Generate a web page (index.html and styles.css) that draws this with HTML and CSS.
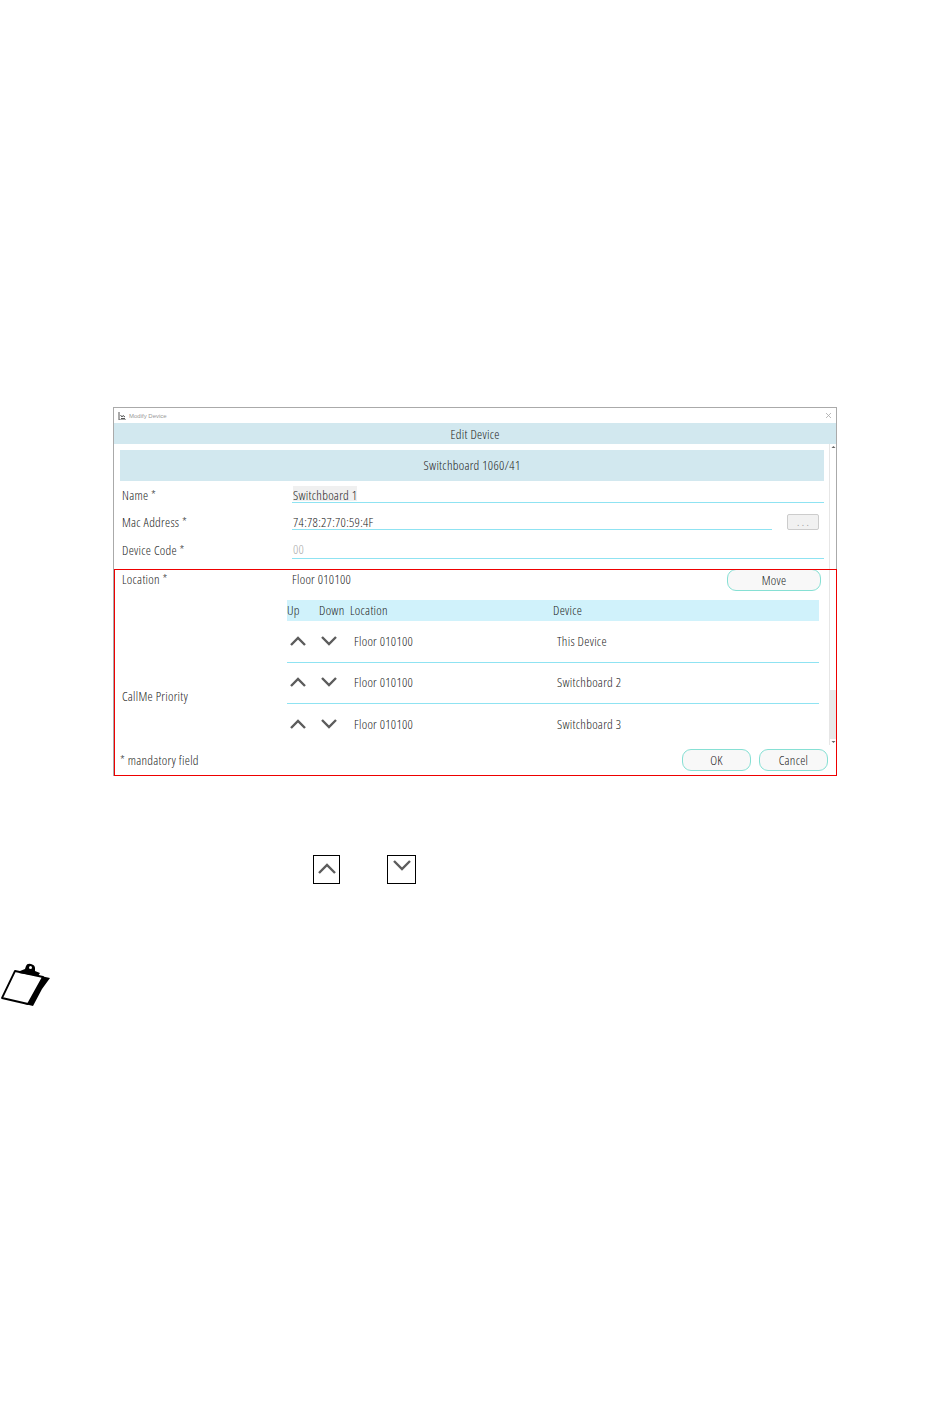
FILE: index.html
```html
<!DOCTYPE html>
<html>
<head>
<meta name="viewport" content="width=device-width, initial-scale=1">
<link rel="stylesheet" href="styles.css">
</head>
<body>

<div class="dialog">
  <div class="titlebar">
    <svg class="app-icon" width="8" height="8" viewBox="0 0 8 8"><path d="M1 0v8h7M2.500 3l1.500 2 1-1.500 2 1.500M3 6.500h4" fill="none" stroke="#555" stroke-width="1"/></svg>
    <span class="title-text">Modify Device</span>
    <svg class="close-icon" width="7" height="7" viewBox="0 0 7 7"><path d="M1 1l5 5M6 1l-5 5" stroke="#aaa" stroke-width="0.8"/></svg>
  </div>
  <div class="heading">Edit Device</div>

  <div class="scroll-area">
    <div class="form">
      <div class="banner">Switchboard 1060/41</div>

      <div class="field field-name">
        <span class="label">Name *</span>
        <div class="value"><span class="selected">Switchboard 1</span></div>
      </div>
      <div class="field field-mac">
        <span class="label">Mac Address *</span>
        <div class="mac-wrap">
          <div class="value">74:78:27:70:59:4F</div>
          <button class="dots" type="button">. . .</button>
        </div>
      </div>
      <div class="field field-code">
        <span class="label">Device Code *</span>
        <div class="value muted">00</div>
      </div>

      <div class="location">
        <span class="label">Location *</span>
        <span class="location-value">Floor 010100</span>
        <button class="round-btn move" type="button">Move</button>
      </div>

      <div class="priority">
        <span class="label priority-label">CallMe Priority</span>
        <div class="table">
          <div class="table-head">
            <span>Up</span><span>Down</span><span>Location</span><span>Device</span>
          </div>
          <div class="table-row">
            <svg class="chev" width="16" height="10" viewBox="0 0 16 10"><path d="M1 9l7-7 7 7"/></svg>
            <svg class="chev" width="16" height="10" viewBox="0 0 16 10"><path d="M1 1l7 7 7-7"/></svg>
            <span class="floor">Floor 010100</span>
            <span>This Device</span>
          </div>
          <div class="table-row">
            <svg class="chev" width="16" height="10" viewBox="0 0 16 10"><path d="M1 9l7-7 7 7"/></svg>
            <svg class="chev" width="16" height="10" viewBox="0 0 16 10"><path d="M1 1l7 7 7-7"/></svg>
            <span class="floor">Floor 010100</span>
            <span>Switchboard 2</span>
          </div>
          <div class="table-row">
            <svg class="chev" width="16" height="10" viewBox="0 0 16 10"><path d="M1 9l7-7 7 7"/></svg>
            <svg class="chev" width="16" height="10" viewBox="0 0 16 10"><path d="M1 1l7 7 7-7"/></svg>
            <span class="floor">Floor 010100</span>
            <span>Switchboard 3</span>
          </div>
        </div>
      </div>
    </div>

    <div class="scrollbar">
      <svg class="arrow" width="7" height="6" viewBox="0 0 7 6"><path d="M3.500 2l2 2h-4z" fill="#666"/></svg>
      <div class="thumb"></div>
      <div class="track"></div>
      <svg class="arrow" width="7" height="6" viewBox="0 0 7 6"><path d="M3.500 4l2-2h-4z" fill="#666"/></svg>
    </div>
  </div>

  <div class="footer">
    <span class="mandatory">* mandatory field</span>
    <button class="round-btn ok" type="button">OK</button>
    <button class="round-btn cancel" type="button">Cancel</button>
  </div>

  <!-- red annotation frame over the dialog -->
  <div class="callout"></div>
</div>

<div class="icon-samples">
  <div class="sample sample-up">
    <svg class="chev" width="18" height="11" viewBox="0 0 18 11"><path d="M1 10l8-8 8 8"/></svg>
  </div>
  <div class="sample sample-down">
    <svg class="chev" width="18" height="11" viewBox="0 0 18 11"><path d="M1 1l8 8 8-8"/></svg>
  </div>
</div>

<svg class="note-icon" width="52" height="46" viewBox="0 0 52 46">
  <path d="M36 13l14 3-8 11-9 17-8-2z" fill="#000"/>
  <path d="M15 9L43 15 28 42 2 36z" fill="#fff" stroke="#000" stroke-width="1.800" stroke-linejoin="round"/>
  <path d="M20 9l5-2 1-3q1-3 5-2t4 4l0 3 5 2-2 3-19-3z" fill="#000"/>
  <circle cx="30.500" cy="5.500" r="1.500" fill="#fff"/>
</svg>

</body>
</html>
```

FILE: styles.css
```css
body {
  margin: 0;
  background-color: white;
  font-family: "Open Sans", "Roboto", sans-serif;
  font-stretch: 75%;
  font-weight: 300;
  font-size: 13px;
  letter-spacing: 0.28px;
  color: #222;
}

* {
  box-sizing: border-box;
}

/* Dialog window */
.dialog {
  position: relative;
  width: 724px;
  height: 369px;
  margin: 407px 0 0 113px;
  border: 1px solid #aaa;
  border-bottom: none;
  background: white;
}

.titlebar {
  display: flex;
  align-items: center;
  height: 15px;
  padding: 0 4px;
}

.app-icon {
  margin-right: 3px;
}

.title-text {
  font-family: "Liberation Sans", sans-serif;
  font-stretch: normal;
  font-weight: 400;
  font-size: 6px;
  letter-spacing: 0;
  color: #999;
}

.close-icon {
  margin-left: auto;
}

.heading {
  height: 21px;
  line-height: 22px;
  text-align: center;
  background-color: #d2e8ef;
}

.scroll-area {
  display: flex;
  height: 301px;
}

.form {
  width: 715px;
}

.banner {
  height: 31px;
  margin: 6px 0 0 6px;
  width: 704px;
  line-height: 31px;
  text-align: center;
  background-color: #d2e8ef;
}

/* Form rows */
.field {
  display: grid;
  grid-template-columns: 170px 532px;
  align-items: end;
  padding-left: 8px;
}

.field-name {
  height: 22px;
}

.field-mac {
  height: 27px;
}

.field-code {
  height: 29px;
}

.label {
  display: block;
  line-height: 14px;
  white-space: nowrap;
}

.field .label {
  padding-bottom: 1px;
}

.field-code .label {
  padding-bottom: 2px;
}

.value {
  height: 18px;
  line-height: 17px;
  padding-left: 1px;
  border-bottom: 1px solid #8fe3f2;
}

.mac-wrap .value {
  width: 480px;
  line-height: 20px;
}

.selected {
  display: inline-block;
  height: 15px;
  margin-top: 1px;
  line-height: 18px;
  vertical-align: top;
  background-color: #f0f0f0;
}

.muted {
  color: #aaa;
}

.mac-wrap {
  display: flex;
}

.dots {
  width: 32px;
  height: 16px;
  margin: 2px 0 0 15px;
  padding: 0;
  border: 1px solid #ccc;
  border-radius: 2px;
  background: #f1f1f1;
  font-family: inherit;
  font-size: 9px;
  color: #999;
}

/* Location row */
.location {
  display: flex;
  align-items: center;
  height: 22px;
  margin-top: 10px;
  padding-left: 8px;
}

.location .label {
  width: 170px;
  margin-bottom: 2px;
}

.location-value {
  margin-bottom: 2px;
}

.round-btn {
  height: 22px;
  padding: 0;
  border: 1px solid #86e0d4;
  border-radius: 9px;
  background: #f8f8f8;
  font-family: inherit;
  font-stretch: inherit;
  font-weight: 300;
  font-size: 13px;
  letter-spacing: inherit;
  color: #222;
}

.move {
  width: 94px;
  margin-left: auto;
  margin-right: 8px;
}

/* Priority table */
.priority {
  display: grid;
  grid-template-columns: 173px 532px;
  margin-top: 9px;
}

.priority-label {
  padding: 89px 0 0 8px;
}

.table-head {
  display: grid;
  grid-template-columns: 32px 31px 203px 1fr;
  height: 21px;
  margin-bottom: 1px;
  line-height: 21px;
  background-color: #d0f2fb;
}

.table-row {
  display: grid;
  grid-template-columns: 31px 36px 203px 1fr;
  align-items: center;
  height: 41px;
  padding-bottom: 2px;
  border-bottom: 1px solid #8fe3f2;
}

.table-row:last-child {
  border-bottom: none;
}

.table-row .chev {
  margin-left: 3px;
}

.chev {
  display: block;
}

.chev path {
  fill: none;
  stroke: #5c5c5c;
  stroke-width: 2.4;
}

/* Scrollbar */
.scrollbar {
  display: flex;
  flex-direction: column;
  width: 7px;
  border-left: 1px solid #e6e6e6;
}

.thumb {
  flex: 0 0 240px;
  background: white;
}

.track {
  flex: 1;
  background: #e8e8e8;
}

.arrow {
  display: block;
  flex: none;
}

/* Footer */
.footer {
  display: flex;
  align-items: center;
  height: 30px;
  padding: 4px 8px 4px 6px;
}

.ok {
  width: 69px;
  margin-left: auto;
}

.cancel {
  width: 69px;
  margin-left: 8px;
}

/* Red frame */
.callout {
  position: absolute;
  left: 0;
  right: -1px;
  top: 161px;
  bottom: 0;
  border: 1px solid #ee0000;
  pointer-events: none;
}

/* Icons shown under the dialog */
.icon-samples {
  display: flex;
  gap: 47px;
  margin: 79px 0 0 313px;
}

.sample {
  display: flex;
  justify-content: center;
  width: 27px;
  height: 29px;
  border: 1px solid #000;
}

.sample-up {
  padding-top: 7px;
}

.sample-down {
  width: 29px;
  padding-top: 4px;
}

.note-icon {
  display: block;
  margin: 78px 0 0 0;
}
```
